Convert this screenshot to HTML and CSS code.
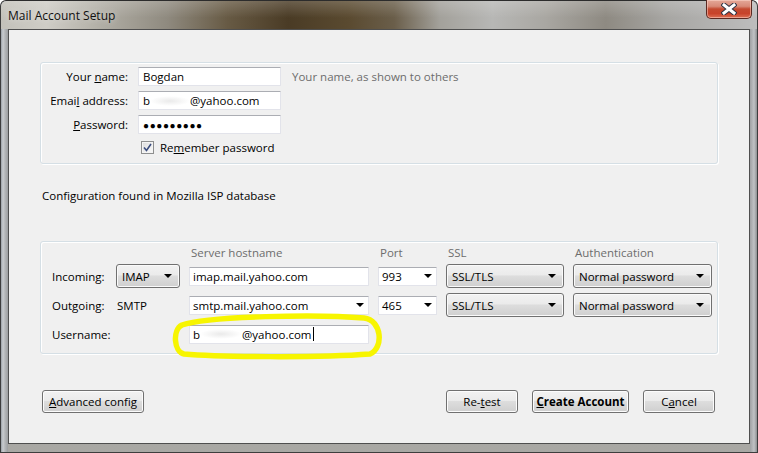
FILE: index.html
```html
<!DOCTYPE html>
<html>
<head>
<meta charset="utf-8">
<link rel="stylesheet" href="styles.css">
</head>
<body>
<div class="window">
  <div class="titlebar">
    <span class="title">Mail Account Setup</span>
    <div class="close">
      <svg width="16" height="12" viewBox="0 0 16 12">
        <path d="M3 2 L13 10 M13 2 L3 10" stroke="#2f3444" stroke-width="5" stroke-linecap="square"/>
        <path d="M3 2 L13 10 M13 2 L3 10" stroke="#ffffff" stroke-width="3" stroke-linecap="square"/>
      </svg>
    </div>
  </div>
  <div class="client">
    <div class="group ident">
      <label class="lbl">Your <u>n</u>ame:</label>
      <div class="field">Bogdan</div>
      <span class="hint">Your name, as shown to others</span>

      <label class="lbl">Emai<u>l</u> address:</label>
      <div class="field">b<span class="smear s1"></span>@yahoo.com</div>
      <span></span>

      <label class="lbl"><u>P</u>assword:</label>
      <div class="field dots">●●●●●●●●●</div>
      <span></span>

      <span></span>
      <div class="check-row">
        <span class="checkbox">
          <svg width="9" height="9" viewBox="0 0 9 9"><path d="M1 4.5 L3.5 7.5 L8 1" fill="none" stroke="#3b4d7e" stroke-width="1.6"/></svg>
        </span>
        <span>Re<u>m</u>ember password</span>
      </div>
      <span></span>
    </div>

    <p class="status">Configuration found in Mozilla ISP database</p>

    <div class="group server">
      <span></span><span></span>
      <span class="head">Server hostname</span>
      <span class="head">Port</span>
      <span class="head">SSL</span>
      <span class="head">Authentication</span>

      <span class="rlbl">Incoming:</span>
      <div class="menu"><span>IMAP</span><i class="arrow"></i></div>
      <div class="field">imap.mail.yahoo.com</div>
      <div class="field combo">993<i class="arrow"></i></div>
      <div class="menu"><span>SSL/TLS</span><i class="arrow"></i></div>
      <div class="menu"><span>Normal password</span><i class="arrow"></i></div>

      <span class="rlbl">Outgoing:</span>
      <span class="smtp">SMTP</span>
      <div class="field combo">smtp.mail.yahoo.com<i class="arrow"></i></div>
      <div class="field combo">465<i class="arrow"></i></div>
      <div class="menu"><span>SSL/TLS</span><i class="arrow"></i></div>
      <div class="menu"><span>Normal password</span><i class="arrow"></i></div>

      <span class="rlbl">Username:</span>
      <span></span>
      <div class="field user">b<span class="smear s2"></span>@yahoo.com<span class="caret"></span></div>
    </div>

    <div class="actions">
      <button class="btn adv"><u>A</u>dvanced config</button>
      <span class="spacer"></span>
      <button class="btn retest">Re-<u>t</u>est</button>
      <button class="btn create"><u>C</u>reate Account</button>
      <button class="btn cancel">C<u>a</u>ncel</button>
    </div>
  </div>
  <svg class="highlight" width="230" height="56" viewBox="0 0 230 56">
    <path d="M14 15 C 40 6, 150 4, 196 8 C 214 10, 216 38, 202 44 C 150 48, 50 47, 16 44 C 6 42, 4 20, 14 15" fill="none" stroke="#f7f500" stroke-width="5.5" stroke-linecap="round"/>
  </svg>
</div>
</body>
</html>
```
FILE: styles.css
```css
* { box-sizing: border-box; }
html, body { margin: 0; padding: 0; }
body {
  width: 758px;
  height: 453px;
  overflow: hidden;
  font-family: "Open Sans", "Noto Sans", sans-serif;
  font-size: 11.5px;
  color: #000;
}
.window {
  position: relative;
  width: 758px;
  height: 453px;
  padding: 0 7px 8px;
  display: flex;
  flex-direction: column;
  border-radius: 6px 6px 0 0;
  background:
    linear-gradient(90deg, #9aa0a6 0, #c9cccf 2px, #b4b6b8 4px, #9c9ea0 7px, transparent 7px, transparent 749px, #9fa1a3 749px, #c0c2c4 753px, #8e9092 756px),
    linear-gradient(180deg, #9b9891 0, #a9a8a4 100%);
  border: 1px solid #3d3d3d;
  border-top-color: #2c2c2c;
}
.titlebar {
  height: 28px;
  margin: 0 -7px;
  padding: 0 5px 0 7px;
  display: flex;
  align-items: flex-start;
  justify-content: space-between;
  border-radius: 6px 6px 0 0;
  background:
    linear-gradient(180deg, rgba(255,255,255,0.18) 0%, rgba(255,255,255,0) 60%),
    linear-gradient(90deg, #c3c1ba 0%, #cfcdc6 6%, #aeaba2 14%, #8f8a7f 22%, #675a44 30%, #4a3b25 38%, #5a4a30 46%, #6a5e4a 52%, #a3a19b 58%, #b7b7b5 65%, #a9a7a2 72%, #8e8a82 80%, #a7a6a3 88%, #bdbdbd 100%);
}
.title {
  margin-top: 6px;
  font-size: 12px;
  color: #101010;
  text-shadow: 0 0 6px rgba(255,255,255,0.6);
}
.close {
  width: 46px;
  height: 19px;
  margin-top: -1px;
  border: 1px solid #5b2a22;
  border-top: none;
  border-radius: 0 0 5px 5px;
  background: linear-gradient(180deg, #e4a898 0%, #d88a78 35%, #c44a30 50%, #c8432a 75%, #dc7054 100%);
  box-shadow: inset 0 0 0 1px rgba(255,220,210,0.5);
  display: flex;
  align-items: center;
  justify-content: center;
}
.client {
  flex: 1;
  background: #f0f0f0;
  border: 1px solid #4f4f4f;
  display: flex;
  flex-direction: column;
}
.group {
  border: 1px solid #d5dfe5;
  border-radius: 3px;
  box-shadow: inset 1px 1px 0 #ffffff, 1px 1px 0 #ffffff;
  margin-left: 31px;
  margin-right: 31px;
}
.ident {
  margin-top: 32px;
  padding: 4px 0 8px;
  display: grid;
  grid-template-columns: 87px 143px 1fr;
  grid-template-rows: 19px 19px 19px 16px;
  column-gap: 10px;
  row-gap: 5px;
  align-items: center;
}
.ident .hint { margin-left: 1px; }
.lbl { text-align: right; white-space: nowrap; }
.hint { color: #6d6d6d; white-space: nowrap; }
.field {
  height: 19px;
  background: #fff;
  border: 1px solid #e2e3ea;
  border-top-color: #abadb3;
  border-radius: 1px;
  padding: 0 4px;
  display: flex;
  align-items: center;
  white-space: nowrap;
  position: relative;
}
.dots { font-size: 10px; letter-spacing: 0.6px; }
.smear {
  display: inline-block;
  height: 10px;
  background: radial-gradient(ellipse at center, rgba(220,220,220,0.6), rgba(255,255,255,0) 70%);
}
.s1 { width: 40px; }
.s2 { width: 42px; }
.check-row {
  display: flex;
  align-items: center;
  gap: 6px;
  padding-left: 3px;
  white-space: nowrap;
}
.checkbox {
  width: 13px;
  height: 13px;
  border: 1px solid #8e8f8f;
  background: linear-gradient(135deg, #dcdcdc, #fbfbfb);
  box-shadow: inset 0 0 0 1px #f4f4f4;
  display: flex;
  align-items: center;
  justify-content: center;
}
.status {
  margin: 24px 0 0 33px;
  line-height: 16px;
}
.server {
  margin-top: 37px;
  padding: 3px 0 7px 10px;
  display: grid;
  grid-template-columns: 56px 64px 180px 59px 118px 139px;
  grid-template-rows: 14px 24px 24px 24px;
  column-gap: 9px;
  row-gap: 5px;
  align-items: center;
}
.head { color: #6d6d6d; padding-left: 2px; white-space: nowrap; }
.rlbl { padding-left: 1px; white-space: nowrap; }
.smtp { padding-left: 1px; }
.menu {
  height: 24px;
  border: 1px solid #707070;
  border-radius: 3px;
  background: linear-gradient(180deg, #f2f2f2 0%, #ebebeb 45%, #dddddd 50%, #cfcfcf 100%);
  box-shadow: inset 0 0 0 1px #fafafa;
  display: flex;
  align-items: center;
  justify-content: space-between;
  padding: 0 7px 0 5px;
  white-space: nowrap;
}
.arrow {
  display: inline-block;
  width: 0;
  height: 0;
  border-left: 4px solid transparent;
  border-right: 4px solid transparent;
  border-top: 4px solid #000;
}
.combo { justify-content: space-between; padding-right: 4px; }
.field.combo .arrow { margin-left: 4px; }
.server .field { padding-left: 3px; }
.user { padding-left: 4px; }
.caret {
  display: inline-block;
  width: 1px;
  height: 14px;
  background: #000;
  margin-left: 1px;
}
.actions {
  margin: 36px 34px 0 33px;
  display: flex;
  gap: 14px;
}
.spacer { flex: 1; }
.btn {
  height: 23px;
  font-family: inherit;
  font-size: 11.5px;
  color: #000;
  border: 1px solid #707070;
  border-radius: 3px;
  background: linear-gradient(180deg, #f2f2f2 0%, #ebebeb 45%, #dddddd 50%, #cfcfcf 100%);
  box-shadow: inset 0 0 0 1px #fcfcfc;
  padding: 0;
  line-height: 19px;
}
.adv { width: 102px; }
.retest { width: 72px; }
.create { width: 97px; font-weight: bold; }
.cancel { width: 72px; }
.highlight {
  position: absolute;
  left: 167px;
  top: 309px;
}
```
